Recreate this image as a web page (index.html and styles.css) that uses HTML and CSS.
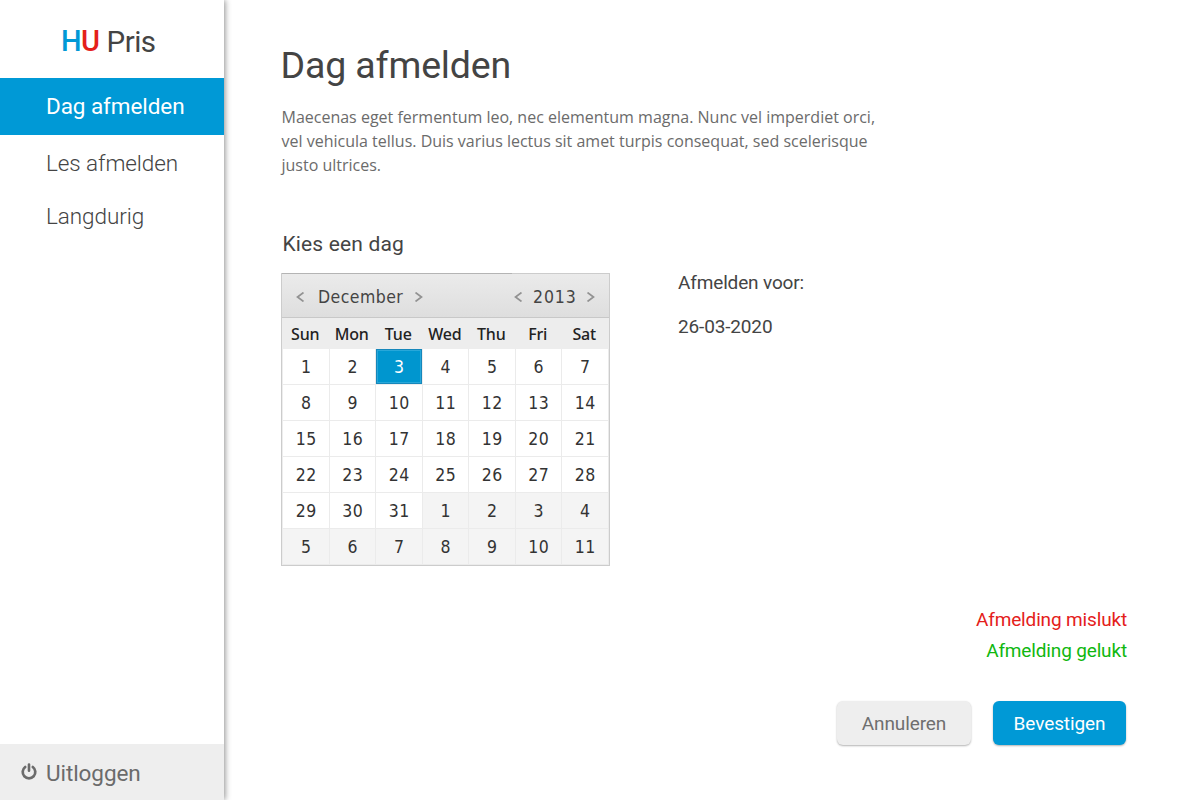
FILE: index.html
```html
<!DOCTYPE html>
<html lang="nl">
<head>
<meta charset="utf-8">
<title>HU Pris</title>
<link rel="stylesheet" href="styles.css">
</head>
<body>
<div class="app">
  <aside class="sidebar">
    <div class="logo"><b class="logo-h">H</b><b class="logo-u">U</b><span class="logo-name">Pris</span></div>
    <nav class="nav">
      <a class="nav-item active"><span>Dag afmelden</span></a>
      <a class="nav-item les"><span>Les afmelden</span></a>
      <a class="nav-item lang"><span>Langdurig</span></a>
    </nav>
    <a class="logout">
      <svg class="power" viewBox="0 0 16 17" width="16" height="17"><path d="M4.2 4A6.3 6.3 0 1 0 11.8 4" fill="none" stroke="#6b6b6b" stroke-width="2.7" stroke-linecap="round"/><path d="M8 1.5v6.2" stroke="#6b6b6b" stroke-width="2.6" stroke-linecap="round"/></svg>
      <span>Uitloggen</span>
    </a>
  </aside>
  <main class="main">
    <h1 class="title"><span>Dag afmelden</span></h1>
    <p class="intro"><span>Maecenas eget fermentum leo, nec elementum magna. Nunc vel imperdiet orci,</span><br>vel vehicula tellus. Duis varius lectus sit amet turpis consequat, sed scelerisque<br>justo ultrices.</p>
    <div class="columns">
      <section class="picker">
        <h2 class="subtitle"><span>Kies een dag</span></h2>
        <div class="calendar">
          <div class="cal-head">
            <svg class="chev" viewBox="0 0 8 10" width="8" height="10"><path d="M7.5 .5 1.5 5l6 4.5"/></svg>
            <span class="month">December</span>
            <svg class="chev" viewBox="0 0 8 10" width="8" height="10"><path d="M.5 .5l6 4.5-6 4.5"/></svg>
            <svg class="chev year-prev" viewBox="0 0 8 10" width="8" height="10"><path d="M7.5 .5 1.5 5l6 4.5"/></svg>
            <span class="year">2013</span>
            <svg class="chev" viewBox="0 0 8 10" width="8" height="10"><path d="M.5 .5l6 4.5-6 4.5"/></svg>
          </div>
          <div class="weekdays"><span>Sun</span><span>Mon</span><span>Tue</span><span>Wed</span><span>Thu</span><span>Fri</span><span>Sat</span></div>
          <div class="days">
            <span>1</span><span>2</span><span class="selected">3</span><span>4</span><span>5</span><span>6</span><span>7</span>
            <span>8</span><span>9</span><span>10</span><span>11</span><span>12</span><span>13</span><span>14</span>
            <span>15</span><span>16</span><span>17</span><span>18</span><span>19</span><span>20</span><span>21</span>
            <span>22</span><span>23</span><span>24</span><span>25</span><span>26</span><span>27</span><span>28</span>
            <span>29</span><span>30</span><span>31</span><span class="out">1</span><span class="out">2</span><span class="out">3</span><span class="out">4</span>
            <span class="out">5</span><span class="out">6</span><span class="out">7</span><span class="out">8</span><span class="out">9</span><span class="out">10</span><span class="out">11</span>
          </div>
        </div>
      </section>
      <section class="summary">
        <div class="summary-label"><span>Afmelden voor:</span></div>
        <div class="summary-date"><span>26-03-2020</span></div>
      </section>
    </div>
    <div class="messages">
      <div class="error">Afmelding mislukt</div>
      <div class="success">Afmelding gelukt</div>
    </div>
    <div class="actions">
      <button class="btn cancel">Annuleren</button>
      <button class="btn confirm">Bevestigen</button>
    </div>
  </main>
</div>
</body>
</html>
```
FILE: styles.css
```css
* { box-sizing: border-box; }
body { margin: 0; background: #fff; color: #444; font-family: Roboto, sans-serif; }
.app { display: flex; width: 1200px; height: 800px; overflow: hidden; }
.sidebar { display: flex; flex-direction: column; flex: none; width: 224px; height: 800px; background: #fff; box-shadow: 1px 0 6px rgba(0,0,0,.45); }
.logo { height: 78px; padding: 6px 0 0 61px; font-size: 29.5px; line-height: 70px; white-space: nowrap; }
.logo b { font-weight: 500; font-size: 29px; letter-spacing: -.5px; vertical-align: 1px; }
.logo-h { color: #0099d6; }
.logo-u { color: #e4201a; }
.logo-name { margin-left: 7px; letter-spacing: -.5px; }
.nav { display: flex; flex-direction: column; }
.nav-item { height: 53px; padding-left: 46px; font-size: 22.5px; line-height: 53px; font-weight: 300; letter-spacing: -.08px; white-space: nowrap; }
.nav-item.active { height: 57px; line-height: 57px; background: #0099d6; color: #fff; font-weight: 400; }
.nav-item.les { height: 55px; line-height: 57px; }
.logout { display: flex; align-items: center; height: 56px; margin-top: auto; padding: 2px 0 0 21px; background: #eee; color: #6b6b6b; font-size: 22.5px; letter-spacing: -.08px; }
.power { margin: -4px 9px 0 0; }
.main { display: flex; flex-direction: column; flex: 1; padding: 35px 74px 0 57px; }
.title { margin: 0 0 0 -.5px; font-size: 37.5px; line-height: 60px; font-weight: 400; letter-spacing: -.15px; }
.intro { margin: 10px 0 0 .5px; font: 16px/24px "Open Sans", sans-serif; color: #6b6b6b; white-space: nowrap; }
.columns { display: flex; margin-top: 52px; }
.picker { width: 329px; }
.subtitle { margin: 0 0 13px 1.5px; font-size: 21px; line-height: 31px; font-weight: 400; letter-spacing: .15px; }
.calendar { height: 293px; border: 1px solid #ccc; background: #ededed; color: #333; font-family: "DejaVu Sans Condensed", "DejaVu Sans", sans-serif; font-stretch: condensed; }
.cal-head { display: flex; align-items: center; height: 44px; margin-top: -1px; padding: 4px 14px 0 14px; height: 45px; border-bottom: 1px solid #c8c8c8; background: linear-gradient(#b4b4b4, #b4b4b4) 0 0 / 230px 1px no-repeat, linear-gradient(#ccc, #ccc) 0 0 / 100% 1px no-repeat, linear-gradient(#ebebeb, #dedede); font-size: 17.5px; }
.chev { flex: none; fill: none; stroke: #929292; stroke-width: 1.7; }
.month { width: 85px; margin: 0 12px 0 14px; color: #444; letter-spacing: .45px; white-space: nowrap; }
.year-prev { margin-left: auto; }
.year { width: 44px; margin: 0 10px 0 11px; color: #444; letter-spacing: .9px; white-space: nowrap; }
.weekdays { display: grid; grid-template-columns: repeat(7, 46.5px); height: 30px; line-height: 32px; font-family: "Noto Sans", sans-serif; font-size: 16px; font-weight: 500; letter-spacing: -.2px; color: #222; text-align: center; }
.days { display: grid; grid-template-columns: repeat(7, 46.5px); grid-auto-rows: 36px; height: 217px; padding: 1px 0 0 1px; }
.days span { border-right: 1px solid #ebebeb; border-bottom: 1px solid #ebebeb; background: #fff; font-size: 17.5px; line-height: 37px; letter-spacing: .5px; text-indent: 1px; text-align: center; }
.days .out { background: #f4f4f4; }
.days .selected { margin: 0 1px 1px 0; border: 1px solid #1687bb; box-shadow: inset 0 0 0 1px #27a7d9; background: #0096cf; color: #fff; line-height: 35px; }
.summary { margin-left: 68px; padding-top: 42px; font-size: 19px; letter-spacing: -.15px; }
.summary-label, .summary-date { line-height: 24px; }
.summary-date { margin-top: 20px; }
.messages { margin: 38px -1px 0 0; text-align: right; font-size: 19px; line-height: 31px; letter-spacing: -.15px; }
.error { color: #e4201a; }
.success { color: #10b710; }
.actions { display: flex; justify-content: flex-end; gap: 22px; margin-top: 35px; }
.btn { height: 44px; padding: 0; border: 0; border-radius: 6px; box-shadow: 0 1px 2px rgba(0,0,0,.3); font: 19px Roboto, sans-serif; letter-spacing: -.1px; }
.cancel { width: 134px; background: #eee; color: #6f6f6f; }
.confirm { width: 133px; background: #0099d6; color: #fff; }
```
